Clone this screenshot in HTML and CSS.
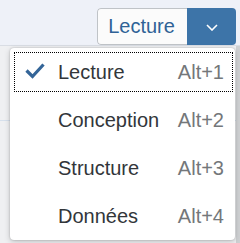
FILE: index.html
```html
<!DOCTYPE html>
<html>

<head>
  <title>Mode menu</title>
  <meta charset="UTF-8">
  <link rel="stylesheet" href="styles.css">
</head>

<body>
  <div class="page">
    <div class="toolbar">
      <div class="modeButton">
        <span class="modeLabel">Lecture</span>
        <span class="modeArrow">
          <svg width="12" height="7" viewBox="0 0 12 7">
            <path d="M1 1 L6 6 L11 1" fill="none" stroke="#ffffff" stroke-width="1.6"/>
          </svg>
        </span>
      </div>
    </div>
    <div class="content">
      <div class="contentRow"></div>
      <div class="scrollStrip"></div>
    </div>

    <!-- dropdown menu sits over the page -->
    <ul class="menu">
      <li class="menuItem focused">
        <span class="check">
          <svg width="20" height="16" viewBox="0 0 20 16">
            <path d="M1.5 7.5 L7.5 13.5 L18.5 1.5" fill="none" stroke="#346598" stroke-width="3.2"/>
          </svg>
        </span>
        <span class="itemText">Lecture</span>
        <span class="shortcut">Alt+1</span>
      </li>
      <li class="menuItem">
        <span class="check"></span>
        <span class="itemText">Conception</span>
        <span class="shortcut">Alt+2</span>
      </li>
      <li class="menuItem">
        <span class="check"></span>
        <span class="itemText">Structure</span>
        <span class="shortcut">Alt+3</span>
      </li>
      <li class="menuItem">
        <span class="check"></span>
        <span class="itemText">Données</span>
        <span class="shortcut">Alt+4</span>
      </li>
    </ul>
  </div>
</body>

</html>
```

FILE: styles.css
```css
html, body {
  margin: 0;
  padding: 0;
}
body {
  font-family: "Liberation Sans", Arial, sans-serif;
  width: 240px;
  height: 243px;
  overflow: hidden;
}
.page {
  position: relative;
  width: 240px;
  height: 243px;
  background-color: #eef1f8;
}
.toolbar {
  height: 46px;
  border-bottom: 1px solid #d9dde4;
  box-sizing: border-box;
  display: flex;
  justify-content: flex-end;
  padding: 8px 4px 0 0;
}
.modeButton {
  display: flex;
  height: 37px;
  width: 139px;
  box-sizing: border-box;
  border-radius: 4px;
  overflow: hidden;
}
.modeLabel {
  flex: 1;
  display: flex;
  align-items: center;
  justify-content: center;
  background-color: #fbfbfb;
  border: 1px solid #bfc3c7;
  border-right: none;
  border-radius: 4px 0 0 4px;
  color: #2f6296;
  font-size: 20px;
  padding-right: 2px;
}
.modeArrow {
  width: 49px;
  display: flex;
  align-items: center;
  justify-content: center;
  background-color: #3d74a8;
  padding-top: 2px;
  box-sizing: border-box;
}
.content {
  position: relative;
  height: 197px;
  background-color: #eff0f2;
}
.contentRow {
  height: 74px;
  border-bottom: 1px solid #d6e0ec;
}
.scrollStrip {
  position: absolute;
  right: 0;
  top: 0;
  bottom: 0;
  width: 4px;
  background-color: #cfd1d3;
}
.menu {
  position: absolute;
  left: 10px;
  top: 48px;
  width: 225px;
  height: 192px;
  margin: 0;
  padding: 0;
  list-style: none;
  display: flex;
  flex-direction: column;
  background-color: #ffffff;
  border-radius: 4px;
  box-shadow: 0 0 2px rgba(0, 0, 0, 0.25), 0 2px 6px rgba(0, 0, 0, 0.18);
}
.menuItem {
  display: flex;
  align-items: center;
  height: 40px;
  flex-shrink: 0;
  margin: 4px 2px 4px 4px;
  box-sizing: border-box;
  padding: 0 9px 0 11px;
  font-size: 20px;
  color: #32363a;
}
.focused {
  border: 1px dotted #000000;
  padding-left: 10px;
  padding-right: 8px;
}
.check {
  width: 20px;
  height: 16px;
  margin-right: 13px;
  display: flex;
  align-items: center;
  margin-top: -2px;
}
.itemText {
  flex: 1;
}
.shortcut {
  color: #74777a;
}
```
